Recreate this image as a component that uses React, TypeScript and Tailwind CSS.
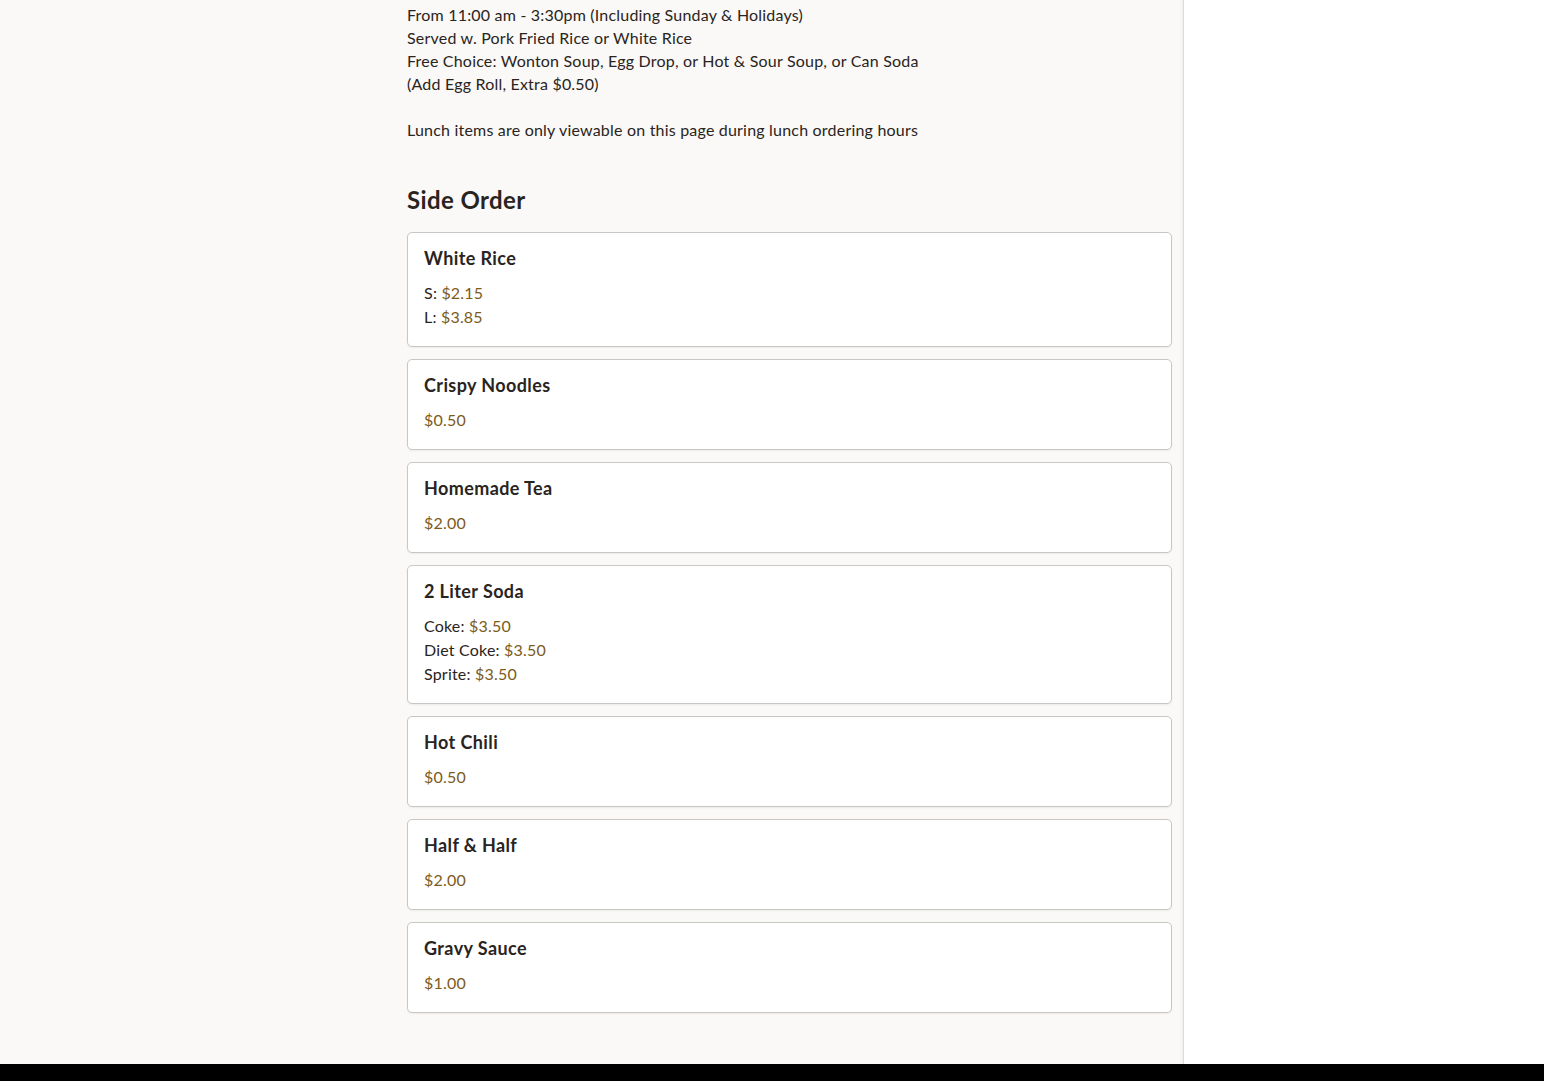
const sides: { name: string; prices: { label?: string; price: string }[] }[] = [
  { name: 'White Rice', prices: [{ label: 'S', price: '$2.15' }, { label: 'L', price: '$3.85' }] },
  { name: 'Crispy Noodles', prices: [{ price: '$0.50' }] },
  { name: 'Homemade Tea', prices: [{ price: '$2.00' }] },
  {
    name: '2 Liter Soda',
    prices: [
      { label: 'Coke', price: '$3.50' },
      { label: 'Diet Coke', price: '$3.50' },
      { label: 'Sprite', price: '$3.50' },
    ],
  },
  { name: 'Hot Chili', prices: [{ price: '$0.50' }] },
  { name: 'Half & Half', prices: [{ price: '$2.00' }] },
  { name: 'Gravy Sauce', prices: [{ price: '$1.00' }] },
]

export default function App() {
  return (
    <div className="min-h-screen flex flex-col bg-white text-[#2a2421]" style={{ fontFamily: 'Lato, "Noto Sans", sans-serif' }}>
      <div className="flex flex-1">
        {/* menu column */}
        <main className="w-[1184px] bg-[#faf9f7] border-r border-[#dedbd8] shadow-[inset_-3px_0_3px_-2px_rgba(0,0,0,0.06)] pt-[3px] pb-[51px]">
          <div className="ml-[407px] w-[765px]">
            <div className="text-[16px] leading-[23px] tracking-[0.2px]">
              <p>From 11:00 am - 3:30pm (Including Sunday &amp; Holidays)</p>
              <p>Served w. Pork Fried Rice or White Rice</p>
              <p>Free Choice: Wonton Soup, Egg Drop, or Hot &amp; Sour Soup, or Can Soda</p>
              <p>(Add Egg Roll, Extra $0.50)</p>
              <p className="h-[23px]"></p>
              <p>Lunch items are only viewable on this page during lunch ordering hours</p>
            </div>

            <h2 className="mt-[43px] mb-[16px] text-[24px] leading-[32px] font-bold tracking-[0.4px]">Side Order</h2>

            <div className="flex flex-col gap-[12px]">
              {sides.map((s) => (
                <div
                  key={s.name}
                  className="bg-white border border-[#c9c7c4] rounded-[5px] shadow-[0_1px_2px_rgba(0,0,0,0.06)] px-[16px] pt-[15px] pb-[17px]"
                >
                  <h3 className="text-[18px] leading-[20px] font-bold mb-[13px] tracking-[0.4px]">{s.name}</h3>
                  <div className="text-[16px] leading-[24px] tracking-[0.2px]">
                    {s.prices.map((p, i) => (
                      <div key={i}>
                        {p.label && <span>{p.label}: </span>}
                        <span className="text-[#7c5b1c]">{p.price}</span>
                      </div>
                    ))}
                  </div>
                </div>
              ))}
            </div>
          </div>
        </main>
        <aside className="flex-1 bg-white"></aside>
      </div>
      <footer className="h-[17px] bg-black"></footer>
    </div>
  )
}
